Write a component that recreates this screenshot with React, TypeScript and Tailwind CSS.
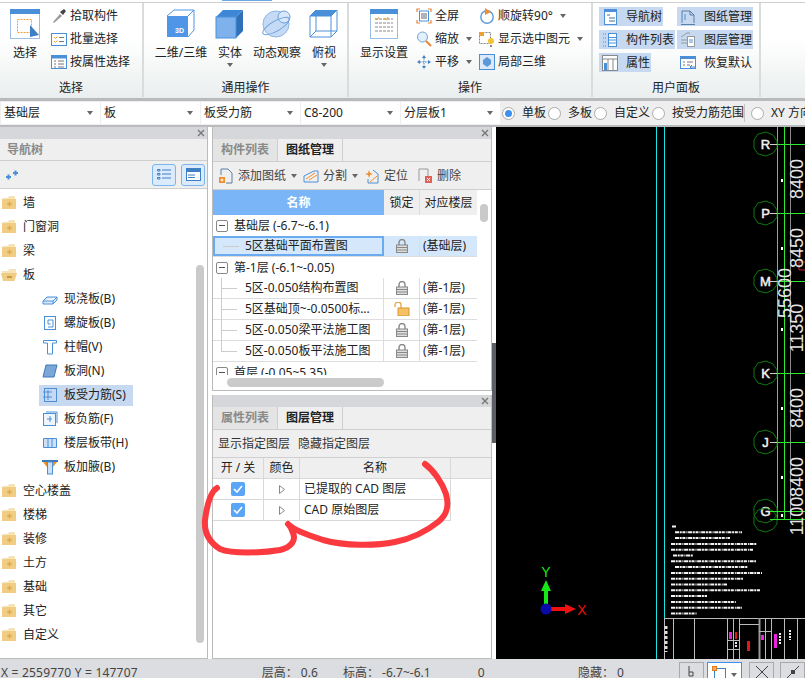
import type { ReactNode } from 'react';

const BLUE = '#4a90d9';

function Caret({ className = '' }: { className?: string }) {
  return <span className={`inline-block h-0 w-0 border-x-[3.5px] border-t-[4px] border-x-transparent border-t-[#666] ${className}`} />;
}

function Ico({ size = 16, children }: { size?: number; children: ReactNode }) {
  return (
    <svg width={size} height={size} viewBox="0 0 16 16" fill="none" className="shrink-0">
      {children}
    </svg>
  );
}

function BigIcon({ kind }: { kind: string }) {
  if (kind === 'select')
    return (
      <svg width="30" height="30" viewBox="0 0 30 30">
        <rect x="0.5" y="0.5" width="29" height="29" fill="#fff" stroke="#9dbfe6" />
        <rect x="0" y="0" width="30" height="5" fill="#4a90d9" />
        <rect x="7.5" y="10.5" width="14" height="13" fill="none" stroke="#f0a030" strokeDasharray="2 1" />
        <path d="M20 16 L29 26 L20 28 Z" fill="#3f7fc4" />
      </svg>
    );
  if (kind === '3d')
    return (
      <svg width="30" height="30" viewBox="0 0 30 30">
        <rect x="1" y="7" width="21" height="21" fill="#4f97e6" />
        <path d="M1 7 L8 1 H28 V21 L22 28 M22 7 L28 1" fill="none" stroke="#4f97e6" />
        <text x="9" y="24" fontSize="7" fontWeight="700" fill="#fff" fontFamily="Liberation Sans, sans-serif">3D</text>
      </svg>
    );
  if (kind === 'solid')
    return (
      <svg width="30" height="30" viewBox="0 0 30 30">
        <path d="M1 8 L8 1 H28 L21 8 Z" fill="#3e86d6" />
        <path d="M21 8 L28 1 V22 L21 29 Z" fill="#2f70b8" />
        <rect x="1" y="8" width="20" height="21" fill="#7fb2ec" stroke="#4a90d9" />
      </svg>
    );
  if (kind === 'orbit')
    return (
      <svg width="32" height="30" viewBox="0 0 32 30">
        <circle cx="15" cy="15" r="13" fill="#c5daf5" stroke="#8fb6e6" />
        <circle cx="23" cy="8" r="6" fill="#d8e7f9" stroke="#6b9fdc" />
        <ellipse cx="15" cy="17" rx="15" ry="5" transform="rotate(-30 15 17)" fill="none" stroke="#6b9fdc" />
      </svg>
    );
  if (kind === 'top')
    return (
      <svg width="30" height="30" viewBox="0 0 30 30">
        <path d="M1 7 L7 1 H28 L22 7 Z" fill="#4a90d9" />
        <path d="M1 7 H22 V28 H1 Z M22 7 L28 1 V22 L22 28 M1 7 L7 1 V22 H28 M7 22 L1 28" fill="none" stroke="#4a90d9" />
      </svg>
    );
  return (
    <svg width="28" height="30" viewBox="0 0 28 30">
      <rect x="0.5" y="0.5" width="27" height="29" fill="#fff" stroke="#9dbfe6" />
      <rect width="28" height="5" fill="#4a90d9" />
      <g stroke="#888" strokeWidth="1" strokeDasharray="3 1">
        <path d="M5 10 H23 M5 14 H23 M5 18 H23 M5 22 H23" />
      </g>
      <path d="M5 9 l2 2 l2 -3 M14 9 l2 2 l2 -3" stroke="#f0a030" fill="none" />
    </svg>
  );
}

function SmallIcon({ kind }: { kind: string }) {
  switch (kind) {
    case 'pick':
      return (
        <Ico>
          <path d="M2 14 L9 6 L11 8 L3 15 Z" fill="#9a9a9a" />
          <path d="M9 4 L13 1 L15 3 L12 7 Z" fill="#444" />
        </Ico>
      );
    case 'batch':
      return (
        <Ico>
          <rect x="0.5" y="2.5" width="15" height="12" fill="#fff" stroke={BLUE} />
          <path d="M3 6 l1.5 1.5 l2 -2 M3 10 l1.5 1.5 l2 -2" stroke="#f0a030" fill="none" />
          <path d="M8 6.5 H13 M8 10.5 H13" stroke="#777" />
        </Ico>
      );
    case 'attr':
      return (
        <Ico>
          <rect x="0.5" y="1.5" width="15" height="13" fill="#fff" stroke={BLUE} />
          <rect y="1" width="16" height="3.5" fill={BLUE} />
          <path d="M3 7 H5 M3 10 H5 M3 13 H5 M7 7 H13 M7 10 H13 M7 13 H13" stroke="#777" />
        </Ico>
      );
    case 'full':
      return (
        <Ico>
          <path d="M1 4 V1 H4 M12 1 H15 V4 M15 12 V15 H12 M4 15 H1 V12" stroke="#e8873a" strokeWidth="1.2" />
          <rect x="3.5" y="3" width="9" height="10" fill="#fff" stroke={BLUE} />
          <path d="M5 6 H11 M5 8 H11 M5 10 H11" stroke="#666" />
        </Ico>
      );
    case 'zoom':
      return (
        <Ico>
          <circle cx="6.5" cy="6" r="5" fill="#e3effb" stroke="#6fa4dc" />
          <path d="M10 10 L15 15" stroke="#e8873a" strokeWidth="2" />
        </Ico>
      );
    case 'pan':
      return (
        <Ico>
          <path d="M8 1 L10 4 H6 Z M8 15 L10 12 H6 Z M1 8 L4 6 V10 Z M15 8 L12 6 V10 Z" fill="#3f7fc4" />
          <path d="M8 4 V12 M4 8 H12" stroke="#3f7fc4" strokeDasharray="1.5 1" />
        </Ico>
      );
    case 'rot':
      return (
        <Ico>
          <circle cx="8" cy="9" r="6.2" stroke="#5b9ad8" strokeWidth="1.4" />
          <path d="M6 0 L12 4 L6 7 Z" fill="#ee8f2c" />
        </Ico>
      );
    case 'sel':
      return (
        <Ico>
          <rect x="0.5" y="1.5" width="11" height="11" fill="#fff" stroke="#888" strokeDasharray="2 1" />
          <rect x="0" y="1" width="5" height="4" fill="#f0a030" />
          <circle cx="12" cy="10" r="3" fill="#f4c430" />
          <path d="M11 14 H13 V16 H11 Z" fill="#888" />
        </Ico>
      );
    case 'local':
      return (
        <Ico>
          <rect x="0.5" y="0.5" width="15" height="15" fill="#dbe9f8" stroke={BLUE} />
          <path d="M8 3 L12 6 V10 L8 13 L4 10 V6 Z" fill="#5b9ad8" />
        </Ico>
      );
    case 'nav':
      return (
        <Ico>
          <rect x="2.5" y="0.5" width="12" height="15" fill="#fff" stroke={BLUE} />
          <rect x="2" y="0" width="13" height="3" fill={BLUE} />
          <path d="M5 6 H8 M7 9 H13 M7 12 H13" stroke="#3f6f9f" />
        </Ico>
      );
    case 'list':
      return (
        <Ico>
          <path d="M1 2 H4 M1 6 H4 M1 10 H4 M1 14 H4" stroke={BLUE} strokeDasharray="1 1" />
          <rect x="6.5" y="1.5" width="8" height="13" fill="#fff" stroke={BLUE} />
          <path d="M6 5.5 H15 M6 8 H15 M6 11 H15" stroke={BLUE} />
        </Ico>
      );
    case 'prop':
      return (
        <Ico>
          <rect x="0.5" y="0.5" width="15" height="15" fill="#fff" stroke="#888" />
          <path d="M0 4 H16 M6 4 V16 M11 4 V16" stroke="#888" />
          <rect x="2" y="8" width="3" height="7" fill={BLUE} />
        </Ico>
      );
    case 'sheet':
      return (
        <Ico>
          <path d="M2 14 V2 H10 L14 6 V14" stroke="#5a7fa8" />
          <path d="M1 15.5 H15 M10 2 V6 H14" stroke="#5a7fa8" />
          <path d="M5 5 V11" stroke={BLUE} />
        </Ico>
      );
    case 'layer':
      return (
        <Ico>
          <path d="M1 5 L7 1 H10 M1 8 H8 M1 11 H8" stroke="#999" />
          <rect x="7.5" y="4.5" width="7" height="10" fill="#fff" stroke="#999" />
          <path d="M9 8 H13 M9 10 H13" stroke={BLUE} />
        </Ico>
      );
    default:
      return (
        <Ico>
          <rect x="0.5" y="1.5" width="15" height="12" fill="#fff" stroke={BLUE} />
          <rect y="1" width="16" height="3" fill={BLUE} />
          <path d="M3 7 H5 M3 10 H5 M7 7 H13 M7 10 H10" stroke="#777" />
          <path d="M15 12 H10 M12 10 L10 12 L12 14" stroke="#3f7fc4" />
        </Ico>
      );
  }
}

function BigButton({ kind, label, caret, w }: { kind: string; label: string; caret?: boolean; w: string }) {
  return (
    <div className={`flex flex-col items-center pt-[2px] ${w}`}>
      <div className="flex h-[30px] items-center justify-center">
        <BigIcon kind={kind} />
      </div>
      <span className="mt-[5px] h-[18px] whitespace-nowrap leading-[18px]">{label}</span>
      {caret && <Caret className="mt-[1px]" />}
    </div>
  );
}

function SmallRow({ kind, label, caret }: { kind: string; label: string; caret?: boolean }) {
  return (
    <div className="flex h-[23px] items-center gap-[3px] whitespace-nowrap">
      <SmallIcon kind={kind} />
      <span>{label}</span>
      {caret && <Caret className="ml-[4px]" />}
    </div>
  );
}

function Group({ label, w, children }: { label: string; w: string; children: ReactNode }) {
  return (
    <div className={`flex h-[94px] shrink-0 flex-col border-r-2 border-[#d9dcdc] ${w}`}>
      <div className="h-[75px] pt-[4px]">{children}</div>
      <div className="text-center leading-[19px] text-[#222]">{label}</div>
    </div>
  );
}

function PanelBtn({ kind, label, w, on = true }: { kind: string; label: string; w: string; on?: boolean }) {
  return (
    <div className={`flex h-[19px] items-center gap-[8px] whitespace-nowrap pl-[3px] ${w} ${on ? 'bg-[#c6d9f0]' : ''}`}>
      <SmallIcon kind={kind} />
      <span>{label}</span>
    </div>
  );
}

function Ribbon() {
  return (
    <div className="h-[101px] border-b-[3px] border-[#b8babb] bg-gradient-to-b from-white from-40% to-[#eaeeee]">
      <div className="flex h-[3px] border-b border-[#cfcfcf] pl-[222px]">
        <div className="h-[1px] w-[50px] bg-[#6aa8e8]" />
      </div>
      <div className="flex">
        <Group label="选择" w="w-[144px]">
          <div className="flex">
            <div className="ml-[8px] w-[34px]">
              <BigButton kind="select" label="选择" w="w-[34px]" />
            </div>
            <div className="ml-[9px] mt-[-3px]">
              <SmallRow kind="pick" label="拾取构件" />
              <SmallRow kind="batch" label="批量选择" />
              <SmallRow kind="attr" label="按属性选择" />
            </div>
          </div>
        </Group>
        <Group label="通用操作" w="w-[205px]">
          <div className="flex">
            <BigButton kind="3d" label="二维/三维" w="w-[64px] ml-[5px]" />
            <BigButton kind="solid" label="实体" caret w="w-[34px]" />
            <BigButton kind="orbit" label="动态观察" w="w-[58px] ml-[1px]" />
            <BigButton kind="top" label="俯视" caret w="w-[36px]" />
          </div>
        </Group>
        <Group label="操作" w="w-[244px]">
          <div className="flex">
            <BigButton kind="display" label="显示设置" w="w-[50px] ml-[10px]" />
            <div className="ml-[7px] mt-[-3px]">
              <SmallRow kind="full" label="全屏" />
              <SmallRow kind="zoom" label="缩放" caret />
              <SmallRow kind="pan" label="平移" caret />
            </div>
            <div className="ml-[7px] mt-[-3px]">
              <SmallRow kind="rot" label="顺旋转90°" caret />
              <SmallRow kind="sel" label="显示选中图元" caret />
              <SmallRow kind="local" label="局部三维" />
            </div>
          </div>
        </Group>
        <Group label="用户面板" w="w-[168px]">
          <div className="ml-[6px] flex flex-col gap-[4px]">
            <div className="flex gap-[14px]">
              <PanelBtn kind="nav" label="导航树" w="w-[64px]" />
              <PanelBtn kind="sheet" label="图纸管理" w="w-[76px]" />
            </div>
            <div className="flex gap-[2px]">
              <PanelBtn kind="list" label="构件列表" w="w-[76px]" />
              <PanelBtn kind="layer" label="图层管理" w="w-[76px]" />
            </div>
            <div className="flex gap-[26px]">
              <PanelBtn kind="prop" label="属性" w="w-[52px]" />
              <PanelBtn kind="reset" label="恢复默认" w="w-[76px]" on={false} />
            </div>
          </div>
        </Group>
      </div>
    </div>
  );
}

function Combo({ label }: { label: string }) {
  return (
    <div className="flex h-[22px] w-[99px] shrink-0 items-center justify-between bg-white pl-[3px] pr-[7px]">
      <span>{label}</span>
      <Caret />
    </div>
  );
}

function Radio({ label, on, w }: { label: string; on?: boolean; w: string }) {
  return (
    <div className={`flex shrink-0 items-center whitespace-nowrap ${w}`}>
      <span className="flex h-[13px] w-[13px] items-center justify-center rounded-full border border-[#aaa] bg-white">
        {on && <span className="h-[7px] w-[7px] rounded-full bg-[#3d8ff0]" />}
      </span>
      <span className="ml-[7px]">{label}</span>
    </div>
  );
}

function OptionBar() {
  return (
    <div className="flex h-[26px] items-center gap-[1px] overflow-hidden border-b-2 border-[#b9bbbd] bg-[#eeeeee] pl-[1px]">
      <Combo label="基础层" />
      <Combo label="板" />
      <Combo label="板受力筋" />
      <Combo label="C8-200" />
      <Combo label="分层板1" />
      <div className="ml-[1px] flex items-center">
        <Radio label="单板" on w="w-[46px]" />
        <Radio label="多板" w="w-[46px]" />
        <Radio label="自定义" w="w-[58px]" />
        <Radio label="按受力筋范围" w="w-[92px]" />
        <div className="mr-[6px] h-[18px] w-px bg-[#c4c4c4]" />
        <Radio label="XY 方向" w="w-[70px]" />
      </div>
    </div>
  );
}

function Closer() {
  return (
    <div className="flex h-[12px] items-center justify-end bg-[#d5d7db] pr-[2px] text-[#777]">
      <svg width="8" height="8" viewBox="0 0 8 8">
        <path d="M1 1 L7 7 M7 1 L1 7" stroke="#777" strokeWidth="1.4" />
      </svg>
    </div>
  );
}

function Folder({ open }: { open?: boolean }) {
  return (
    <svg width="16" height="14" viewBox="0 0 16 14" className="shrink-0">
      {open ? (
        <>
          <path d="M1 3 H7 L8 1 H15 V5 H1 Z" fill="#f6e3ba" />
          <path d="M0 5 H16 L13.5 13 H2 Z" fill="#f0cd82" />
          <path d="M6 9 H11" stroke="#b98a35" strokeWidth="1.5" />
        </>
      ) : (
        <>
          <path d="M2 2 H7 L8 0 H14 V3 H2 Z" fill="#f6e3ba" />
          <rect x="1" y="3" width="14" height="10" fill="#f0cd82" />
          <path d="M6 8 H11 M8.5 5.5 V10.5" stroke="#dcaa50" strokeWidth="1.5" />
        </>
      )}
    </svg>
  );
}

function TreeIcon({ kind }: { kind: string }) {
  const s = '#4a90d9';
  const icons: Record<string, ReactNode> = {
    cast: <path d="M1 10 L5 6 H15 V9 L11 13 H1 Z M1 10 H11 L15 6 M11 10 V13" stroke={s} fill="#dbe9f8" />,
    spiral: (
      <>
        <rect x="2.5" y="1.5" width="11" height="13" stroke={s} />
        <path d="M6 12 H11 V5 H6 V9 H8.5" stroke={s} />
      </>
    ),
    cap: <path d="M1.5 1.5 H14.5 V4 H10.5 V15 H5.5 V4 H1.5 Z" stroke={s} fill="#fff" />,
    hole: <path d="M4 2 H15 L12 14 H1 Z" fill="#7aa6d8" stroke="#3d78b8" />,
    bar: (
      <>
        <rect x="2.5" y="1.5" width="12" height="13" stroke={s} />
        <path d="M1 5 H10 M1 10 H10 M6 3 V13" stroke={s} />
      </>
    ),
    neg: (
      <>
        <rect x="1.5" y="2.5" width="12" height="12" stroke={s} fill="#eef5fc" />
        <path d="M4 1 H15 V12 M5 8 H10 M8 5 V11" stroke={s} />
      </>
    ),
    band: (
      <>
        <rect x="1.5" y="3.5" width="13" height="9" fill="#cfe0f4" />
        <path d="M1.5 3.5 H14.5 V12.5 H1.5 Z M6 3 V13 M10 3 V13" stroke={s} />
      </>
    ),
    haunch: (
      <>
        <path d="M0 1 H16 V3 H0 Z" fill="#3d78b8" />
        <path d="M1 3 H5 V8 Z M15 3 H11 V8 Z" fill="#ee8f2c" />
        <rect x="5.5" y="3" width="5" height="12" fill="#cfe0f4" stroke={s} />
      </>
    ),
  };
  return <Ico>{icons[kind]}</Ico>;
}

const treeTop = ['墙', '门窗洞', '梁'];
const treeKids = [
  { kind: 'cast', label: '现浇板(B)' },
  { kind: 'spiral', label: '螺旋板(B)' },
  { kind: 'cap', label: '柱帽(V)' },
  { kind: 'hole', label: '板洞(N)' },
  { kind: 'bar', label: '板受力筋(S)', on: true },
  { kind: 'neg', label: '板负筋(F)' },
  { kind: 'band', label: '楼层板带(H)' },
  { kind: 'haunch', label: '板加腋(B)' },
];
const treeEnd = ['空心楼盖', '楼梯', '装修', '土方', '基础', '其它', '自定义'];

function TopRow({ label, open }: { label: string; open?: boolean }) {
  return (
    <div className="flex h-6 items-center gap-[6px] pl-[1px]">
      <Folder open={open} />
      <span>{label}</span>
    </div>
  );
}

function NavPanel() {
  return (
    <div className="flex w-[208px] shrink-0 flex-col border-r border-b border-[#bbb] bg-white">
      <Closer />
      <div className="flex h-[22px] items-center border-b border-[#cfcfcf] bg-[#efefef] pl-[7px] font-bold text-[#8a8a8a]">导航树</div>
      <div className="flex h-[28px] items-center justify-between border-b border-[#cfcfcf] bg-[#efefef] pl-[6px] pr-[2px]">
        <svg width="12" height="10" viewBox="0 0 12 10">
          <path d="M0 7 H5 M2.5 4.5 V9.5 M7 3 H12 M9.5 0.5 V5.5" stroke={BLUE} strokeWidth="2" />
        </svg>
        <div className="flex gap-[5px]">
          <div className="flex h-[22px] w-[24px] items-center justify-center rounded-[3px] border border-[#7ab5f0] bg-[#dcebfb]">
            <svg width="14" height="13" viewBox="0 0 14 13" fill="none">
              <path d="M0.5 1.5 H3 V3 H0.5 Z M0.5 5.5 H3 V7 H0.5 Z M0.5 9.5 H3 V11 H0.5 Z M5 2 H14 M5 6 H14 M5 10 H14" stroke="#3f7fc4" />
            </svg>
          </div>
          <div className="flex h-[22px] w-[24px] items-center justify-center rounded-[3px] border border-[#7ab5f0] bg-[#dcebfb]">
            <svg width="15" height="13" viewBox="0 0 15 13">
              <rect x="0.5" y="0.5" width="14" height="12" fill="#fff" stroke="#3f7fc4" />
              <rect width="15" height="4" fill="#3f7fc4" />
              <path d="M2 7 H9 M2 9.5 H9" stroke="#3f7fc4" />
            </svg>
          </div>
        </div>
      </div>
      <div className="relative flex-1 pt-[2px]">
        {treeTop.map((t) => (
          <TopRow key={t} label={t} />
        ))}
        <TopRow label="板" open />
        {treeKids.map((k) => (
          <div key={k.label} className="flex h-6 items-center pl-[39px]">
            <div className={`flex h-[21px] items-center gap-[6px] pl-[3px] pr-[6px] ${k.on ? 'w-[94px] bg-[#c6d9f0]' : ''}`}>
              <TreeIcon kind={k.kind} />
              <span className="whitespace-nowrap">{k.label}</span>
            </div>
          </div>
        ))}
        {treeEnd.map((t) => (
          <TopRow key={t} label={t} />
        ))}
        <div className="absolute left-[196px] top-[76px] h-[378px] w-[8px] rounded-full bg-[#cacaca]" />
      </div>
    </div>
  );
}

function Tab({ label, on }: { label: string; on?: boolean }) {
  return (
    <div className={`flex h-[22px] w-[65px] items-center justify-center border-r border-[#cfcfcf] font-bold ${on ? 'bg-[#efefef] text-[#222]' : 'bg-[#e4e4e4] text-[#8a8a8a]'}`}>
      {label}
    </div>
  );
}

function Lock({ open }: { open?: boolean }) {
  if (open)
    return (
      <svg width="16" height="14" viewBox="0 0 16 14" fill="none">
        <path d="M1 5 V3 A3 3 0 0 1 7 3 V6" stroke="#e8a33c" strokeWidth="1.3" />
        <rect x="4" y="6" width="11" height="8" fill="#f4c164" stroke="#d9962b" />
      </svg>
    );
  return (
    <svg width="12" height="14" viewBox="0 0 12 14" fill="none">
      <path d="M3 6 V3.5 A3 3 0 0 1 9 3.5 V6" stroke="#888" strokeWidth="1.4" />
      <rect x="0.5" y="6" width="11" height="7.5" fill="#ddd" stroke="#888" />
      <path d="M1 8.5 H11 M1 11 H11" stroke="#888" />
    </svg>
  );
}

function GroupRow({ label }: { label: string }) {
  return (
    <div className="flex h-[21px] items-center gap-[6px] pl-[3px]">
      <span className="flex h-[12px] w-[12px] items-center justify-center rounded-[2px] border border-[#888] bg-white">
        <span className="h-px w-[6px] bg-[#555]" />
      </span>
      <span>{label}</span>
    </div>
  );
}

function SheetRow({ name, floor, open, on, last }: { name: string; floor: string; open?: boolean; on?: boolean; last?: boolean }) {
  return (
    <div className={`flex h-[21px] border-b border-[#dddddd] ${on ? 'bg-[#d4e7fb]' : ''}`}>
      <div className={`relative flex w-[171px] items-center whitespace-nowrap ${on ? 'border-2 border-[#6aaaf0] pl-[30px]' : 'border-r border-[#dddddd] pl-[32px]'}`}>
        <span className={`absolute left-[8px] top-0 w-px bg-[#cccccc] ${last ? 'h-[10px]' : 'h-[21px]'} ${on ? 'hidden' : ''}`} />
        <span className={`absolute left-[8px] h-px w-[16px] bg-[#cccccc] ${on ? 'top-[8px]' : 'top-[10px]'}`} />
        {name}
      </div>
      <div className="flex w-[36px] items-center justify-center border-r border-[#dddddd]">
        <Lock open={open} />
      </div>
      <div className="flex w-[57px] items-center pl-[3px]">{floor}</div>
    </div>
  );
}

function SheetPanel() {
  return (
    <div className="flex h-[264px] shrink-0 flex-col border-x border-b border-[#bbb] bg-white">
      <Closer />
      <div className="flex bg-[#e4e4e4]">
        <Tab label="构件列表" />
        <Tab label="图纸管理" on />
        <div className="flex-1 bg-[#efefef]" />
      </div>
      <div className="flex h-[29px] items-center gap-[4px] border-y border-[#cfcfcf] bg-[#efefef] pl-[5px] text-[#444]">
        <svg width="16" height="16" viewBox="0 0 16 16" fill="none">
          <path d="M3 7 V1 H10 L14 5 V15 H8" stroke="#5a7fa8" />
          <rect x="1" y="9" width="6" height="6" fill="#ee8f2c" />
          <path d="M2.5 12 H5.5 M4 10.5 V13.5" stroke="#fff" />
        </svg>
        <span>添加图纸</span>
        <Caret className="ml-[1px]" />
        <svg className="ml-[2px]" width="16" height="16" viewBox="0 0 16 16" fill="none">
          <path d="M1 8 L11 3 H15 V14 H1 Z" stroke={BLUE} />
          <path d="M3 11 L12 5 M6 12 L14 7" stroke="#ee8f2c" />
        </svg>
        <span>分割</span>
        <Caret className="ml-[1px]" />
        <svg className="ml-[2px]" width="16" height="16" viewBox="0 0 16 16" fill="none">
          <path d="M5 2 L6 5 L9 6 L6 7 L5 10 L4 7 L1 6 L4 5 Z" fill="#ee8f2c" />
          <path d="M9 2 L14 6 V15 H4 V11" stroke={BLUE} />
          <path d="M6 14 L13 8" stroke="#ee8f2c" />
        </svg>
        <span>定位</span>
        <svg className="ml-[5px]" width="16" height="16" viewBox="0 0 16 16" fill="none">
          <path d="M2 13 V1 H11 V8" stroke="#999" />
          <rect x="8" y="8" width="7" height="7" fill="#e0605a" />
          <path d="M10 10 L13 13 M13 10 L10 13" stroke="#fff" />
        </svg>
        <span>删除</span>
      </div>
      <div className="relative flex-1 overflow-hidden">
        <div className="flex h-[25px]">
          <div className="flex w-[171px] items-center justify-center bg-[#7ab5f7] font-bold text-white">名称</div>
          <div className="flex w-[36px] items-center justify-center border-r border-[#ddd] bg-[#efefef]">锁定</div>
          <div className="flex w-[57px] items-center justify-center bg-[#efefef]">对应楼层</div>
        </div>
        <div className="h-[160px] w-[264px] overflow-hidden">
          <GroupRow label="基础层 (-6.7~-6.1)" />
          <SheetRow name="5区基础平面布置图" floor="(基础层)" on />
          <GroupRow label="第-1层 (-6.1~-0.05)" />
          <SheetRow name="5区-0.050结构布置图" floor="(第-1层)" />
          <SheetRow name="5区基础顶~-0.0500标..." floor="(第-1层)" open />
          <SheetRow name="5区-0.050梁平法施工图" floor="(第-1层)" />
          <SheetRow name="5区-0.050板平法施工图" floor="(第-1层)" last />
          <GroupRow label="首层 (-0.05~5.35)" />
        </div>
        <div className="absolute left-[267px] top-[14px] h-[18px] w-[8px] rounded-full bg-[#cacaca]" />
        <div className="ml-[14px] mt-[3px] h-[9px] w-[157px] rounded-full bg-[#cacaca]" />
      </div>
    </div>
  );
}

function LayerCheck() {
  return (
    <span className="flex h-[14px] w-[14px] items-center justify-center rounded-[2px] bg-[#5aa5f5]">
      <svg width="10" height="8" viewBox="0 0 10 8" fill="none">
        <path d="M1 4 L4 7 L9 1" stroke="#fff" strokeWidth="1.6" />
      </svg>
    </span>
  );
}

function LayerRow({ name }: { name: string }) {
  return (
    <div className="flex h-[21px]">
      <div className="flex w-[238px] border-b border-[#d8d8d8]">
        <div className="flex w-[51px] items-center justify-center border-r border-[#d8d8d8]">
          <LayerCheck />
        </div>
        <div className="flex w-[36px] items-center justify-center border-r border-[#d8d8d8]">
          <svg width="6" height="9" viewBox="0 0 6 9" fill="none">
            <path d="M0.5 0.5 L5.5 4.5 L0.5 8.5 Z" stroke="#888" />
          </svg>
        </div>
        <div className="flex w-[151px] items-center border-r border-[#d8d8d8] pl-[4px]">{name}</div>
      </div>
    </div>
  );
}

function LayerPanel() {
  return (
    <div className="mt-[4px] flex flex-1 flex-col border-x border-b border-[#bbb] bg-white">
      <Closer />
      <div className="flex bg-[#e4e4e4]">
        <Tab label="属性列表" />
        <Tab label="图层管理" on />
        <div className="flex-1 bg-[#efefef]" />
      </div>
      <div className="flex h-[29px] items-center gap-[8px] border-y border-[#cfcfcf] bg-[#efefef] pl-[5px] text-[#333]">
        <span>显示指定图层</span>
        <span>隐藏指定图层</span>
      </div>
      <div className="flex h-[21px] border-b border-[#d8d8d8] bg-[#efefef]">
        <div className="flex w-[51px] items-center justify-center border-r border-[#d8d8d8]">开 / 关</div>
        <div className="flex w-[36px] items-center justify-center border-r border-[#d8d8d8]">颜色</div>
        <div className="flex w-[151px] items-center justify-center border-r border-[#d8d8d8]">名称</div>
      </div>
      <LayerRow name="已提取的 CAD 图层" />
      <LayerRow name="CAD 原始图层" />
    </div>
  );
}

const gridLabels = [
  { l: 'R', y: 144 },
  { l: 'P', y: 213 },
  { l: 'M', y: 281 },
  { l: 'K', y: 373 },
  { l: 'J', y: 442 },
  { l: 'G', y: 511 },
];
const dims = [
  { t: '8400', x: 803, y: 179 },
  { t: '8450', x: 803, y: 248 },
  { t: '55600', x: 791, y: 293 },
  { t: '11350', x: 803, y: 328 },
  { t: '8400', x: 803, y: 408 },
  { t: '8400', x: 803, y: 477 },
  { t: '1100', x: 803, y: 516 },
];
const noteLines = [
  [672, 4], [675, 67], [675, 55], [671, 86], [671, 82], [673, 20], [671, 85], [675, 73], [671, 91],
  [671, 72], [671, 56], [671, 89], [671, 36], [671, 65], [671, 71], [671, 26],
];
const titleX = [664, 673, 694, 727, 733, 739, 765, 771, 784, 797];

function CadView() {
  return (
    <div className="flex-1 bg-black">
      <svg width="309" height="532" viewBox="496 127 309 532" className="block">
        <path d="M656.5 127 V659 M664.5 127 V659" stroke="#19e3e3" />
        <path d="M777.5 127 V520 M784.5 127 V520" stroke="#2fe82f" />
        <path d="M790.5 127 V520" stroke="#8a8a8a" />
        {gridLabels.map((g) => (
          <g key={g.l}>
            <polygon
              points={`754,${g.y - 4} 758,${g.y - 10} 766,${g.y - 12} 773,${g.y - 9} 777,${g.y - 3} 777,${g.y + 4} 773,${g.y + 9} 766,${g.y + 12} 758,${g.y + 10} 754,${g.y + 4}`}
              fill="none"
              stroke="#0d7a0d"
            />
            <path d={`M770 ${g.y + 0.5} H777`} stroke="#ccc" />
            <path d={`M777 ${g.y + 0.5} H805`} stroke="#2fe82f" />
            <text x="765.5" y={g.y + 5} textAnchor="middle" fontSize="13" fill="#f2f2f2" stroke="#f2f2f2" strokeWidth="0.5" fontFamily="Liberation Sans, sans-serif">
              {g.l}
            </text>
          </g>
        ))}
        <polygon points="754,516 758,510 766,508 773,511 777,517 777,524 773,529 766,532 758,530 754,524" fill="none" stroke="#0d7a0d" />
        <path d="M770 511.5 H805 M770 519.5 H805" stroke="#2fe82f" />
        <path d="M799 262 H805 M799 262 V270 H805" stroke="#c02020" fill="none" />
        <path d="M781 179 h2 v3 h-2 z M781 247 h2 v3 h-2 z M781 328 h2 v3 h-2 z M781 476 h2 v3 h-2 z M781 514 h2 v3 h-2 z M781 407 h2 v3 h-2 z" fill="#fff" />
        {dims.map((d) => (
          <text
            key={`${d.t}${d.y}`}
            transform={`translate(${d.x} ${d.y}) rotate(-90)`}
            textAnchor="middle"
            fontSize="18"
            fill="#e4e4e4"
            fontFamily="Liberation Sans, sans-serif"
          >
            {d.t}
          </text>
        ))}
        {noteLines.map(([x, w], i) => (
          <path key={i} d={`M${x} ${526.5 + i * 5.8} h${w}`} stroke="#f4f4f4" strokeWidth="2" strokeDasharray="4 0.7 2 0.7 3 1 1 0.7" />
        ))}
        <path d="M664 618.5 H805" stroke="#bbb" />
        {titleX.map((x) => (
          <path key={x} d={`M${x}.5 618 V659`} stroke="#bbb" />
        ))}
        <path d="M759.5 618 V659" stroke="#999" strokeWidth="2" />
        <path d="M739 624.5 H759 M759 631.5 H771 M727 640.5 H739 M727 649.5 H739" stroke="#bbb" />
        <path d="M666 626 V652" stroke="#ddd" strokeWidth="3" strokeDasharray="3 2" />
        <path d="M729 632 h3 v7 h-3 z M761 635 h3 v5 h-3 z M774 634 h3 v14 h-3 z" fill="#f020e0" />
        <path d="M747 641 h3 v10 h-3 z M735 632 h2 v7 h-2 z" fill="#e01818" />
        <path d="M780 633 V644 M790 630 V640 M736 642 V648" stroke="#eee" strokeWidth="2" strokeDasharray="2 1" />
        <path d="M546 604 V590" stroke="#19e619" strokeWidth="4" />
        <path d="M541 591 L546 580 L551 591 Z" fill="#19e619" />
        <path d="M551 609 H566" stroke="#f01010" strokeWidth="4" />
        <path d="M565 604 L576 609 L565 614 Z" fill="#f01010" />
        <circle cx="546" cy="609" r="5.5" fill="#0a0aa8" />
        <text x="546" y="577" textAnchor="middle" fontSize="14" fill="#19e619" fontFamily="Liberation Sans, sans-serif">Y</text>
        <text x="582" y="615" textAnchor="middle" fontSize="14" fill="#f01010" fontFamily="Liberation Sans, sans-serif">X</text>
      </svg>
    </div>
  );
}

function StatusBar() {
  return (
    <div className="flex h-[19px] items-start overflow-hidden bg-[#dcdde0] text-[#444]">
      <span className="ml-[1px] mt-[5px] w-[263px] whitespace-nowrap tracking-[0.2px]">X = 2559770 Y = 147707</span>
      <span className="mt-[5px] w-[82px] whitespace-nowrap">层高：&nbsp;0.6</span>
      <span className="mt-[5px] w-[136px] whitespace-nowrap">标高：&nbsp;-6.7~-6.1</span>
      <span className="mt-[5px] w-[101px]">0</span>
      <span className="mt-[5px] w-[102px] whitespace-nowrap">隐藏：&nbsp;0</span>
      <div className="mt-[3px] flex gap-[3px]">
        <div className="flex h-[20px] w-[25px] items-start justify-center border border-[#aaa] pt-[3px]">
          <svg width="10" height="12" viewBox="0 0 10 12" fill="none">
            <path d="M2 0 V10 H6 V6 H2" stroke="#444" />
          </svg>
        </div>
        <div className="flex h-[20px] w-[35px] items-start gap-[5px] border border-[#3d8ff0] bg-white pl-[4px] pt-[3px] ml-[0px]">
          <svg width="14" height="14" viewBox="0 0 14 14" fill="none">
            <rect x="2.5" y="2.5" width="11" height="11" stroke="#3f7fc4" />
            <rect x="0.5" y="0.5" width="4" height="4" fill="#f4a860" stroke="#e07b20" />
          </svg>
          <Caret className="mt-[7px]" />
        </div>
        <div className="ml-[4px] flex h-[20px] w-[25px] items-start justify-center border border-[#aaa] pt-[2px]">
          <svg width="14" height="14" viewBox="0 0 14 14">
            <path d="M1 1 L13 13 M13 1 L1 13" stroke="#444" />
          </svg>
        </div>
        <div className="ml-[3px] flex h-[20px] w-[25px] items-start justify-center border border-[#aaa] pt-[2px]">
          <svg width="14" height="14" viewBox="0 0 14 14">
            <path d="M1 13 L13 1" stroke="#444" />
            <rect x="5" y="5" width="4" height="4" fill="#444" />
          </svg>
        </div>
      </div>
    </div>
  );
}

export default function App() {
  return (
    <div className="relative flex h-[678px] w-[805px] flex-col overflow-hidden bg-white text-[12px] text-[#222] [font-family:'Noto_Sans','Noto_Sans_CJK_SC',sans-serif]">
      <Ribbon />
      <OptionBar />
      <div className="flex min-h-0 flex-1">
        <NavPanel />
        <div className="w-[4px] shrink-0 bg-white" />
        <div className="flex w-[280px] shrink-0 flex-col">
          <SheetPanel />
          <LayerPanel />
        </div>
        <div className="relative w-[4px] shrink-0 bg-white">
          <div className="absolute left-0 top-[216px] h-[100px] w-full bg-[#5c6066]" />
        </div>
        <CadView />
      </div>
      <StatusBar />
      <svg className="pointer-events-none absolute left-0 top-0" width="805" height="678" fill="none">
        <path
          d="M217 488 C210 492 207 505 205 520 C204 532 209 542 220 549 C232 554 262 553 280 550 C292 547 296 540 293 533 C292 529 290 526 288 524 C294 530 305 534 323 540 C345 546 375 546 395 542 C415 538 428 530 438 522 C448 514 449 505 446 494 C442 482 433 470 425 464"
          stroke="#fb3a40"
          strokeWidth="6"
          strokeLinecap="round"
          strokeLinejoin="round"
        />
      </svg>
    </div>
  );
}
